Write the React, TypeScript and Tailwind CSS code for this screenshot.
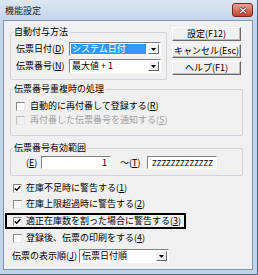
import React from 'react';

// underlined mnemonic letter, e.g. (D)
const Mn: React.FC<{ c: string }> = ({ c }) => (
  <>
    (<span className="underline underline-offset-[1px]">{c}</span>)
  </>
);

const Check: React.FC<{ checked?: boolean; disabled?: boolean }> = ({ checked = false, disabled = false }) => (
  <div
    className={`w-[9px] h-[9px] shrink-0 border border-t-[#8a8a8a] border-l-[#8a8a8a] border-r-[#e8e8e8] border-b-[#e8e8e8] flex items-center justify-center ${
      disabled ? 'bg-[#f0f0f0] border-t-[#c0c0c0] border-l-[#c0c0c0]' : 'bg-white'
    }`}
  >
    {checked && (
      <svg width="7" height="7" viewBox="0 0 7 7">
        <path d="M0.8 3.4 L2.7 5.3 L6.3 1.2" fill="none" stroke="#000" strokeWidth="1.4" />
      </svg>
    )}
  </div>
);

const DropBtn: React.FC = () => (
  <div className="w-[11px] h-full shrink-0 bg-[#f0f0f0] border border-t-white border-l-white border-r-[#696969] border-b-[#696969] flex items-center justify-center">
    <svg width="5" height="3" viewBox="0 0 5 3">
      <polygon points="0,0 5,0 2.5,3" fill="#000" />
    </svg>
  </div>
);

const Select: React.FC<{ text: string; selected?: boolean; className: string }> = ({ text, selected, className }) => (
  <div
    className={`${className} h-[14px] bg-white border border-t-[#808080] border-l-[#808080] border-r-white border-b-white flex p-px`}
  >
    <div
      className={`flex-1 mr-[2px] pl-[1px] flex items-center leading-[10px] ${
        selected ? 'bg-[#3399ff] text-white' : ''
      }`}
    >
      {text}
    </div>
    <DropBtn />
  </div>
);

const Button: React.FC<{ children: React.ReactNode }> = ({ children }) => (
  <div className="w-[69px] h-[14px] bg-[#f0f0f0] border border-t-white border-l-white border-r-[#696969] border-b-[#696969] shadow-[inset_-1px_-1px_0_#bdbdbd] flex items-center justify-center leading-[10px]">
    {children}
  </div>
);

const TextBox: React.FC<{ text: string; small?: boolean }> = ({ text, small }) => (
  <div
    className={`w-[70px] h-[13px] bg-white border border-t-[#808080] border-l-[#808080] border-r-white border-b-white flex items-center justify-end pr-[3px] ${
      small ? 'text-[8px] leading-[9px]' : 'leading-[10px]'
    }`}
  >
    {text}
  </div>
);

export default function App() {
  return (
    <div className="w-[258px] h-[275px] bg-[#c2d4e8] flex flex-col font-['Noto_Sans_CJK_JP',sans-serif] text-[9px] leading-[12px] text-black overflow-hidden border-r border-b border-[#50698a]">
      {/* Title bar */}
      <div className="h-[21px] shrink-0 flex items-start bg-gradient-to-b from-[#dce7f3] to-[#c2d4e8]">
        <span className="ml-[5px] mt-[5px] leading-[12px] text-[#1e1e1e]">機能設定</span>
        <div className="ml-auto mr-[4px] mt-[3px] w-[21px] h-[14px] rounded-[3px] border border-[#6e2b23] bg-gradient-to-b from-[#e8a194] to-[#c4402f] flex items-center justify-center">
          <svg width="8" height="7" viewBox="0 0 8 7">
            <path d="M1 1 L7 6 M7 1 L1 6" stroke="#3d1510" strokeWidth="2.6" />
            <path d="M1 1 L7 6 M7 1 L1 6" stroke="#fff" strokeWidth="1.4" />
          </svg>
        </div>
      </div>

      {/* Client area */}
      <div className="ml-[4px] w-[248px] h-[248px] shrink-0 bg-[#f0f0f0] shadow-[0_0_0_1px_#7f97b3] flex flex-col">
        {/* Top: group + buttons */}
        <div className="flex pt-[6px] pl-[6px]">
          <div className="mt-[5px] w-[157px] h-[48px] border border-[#cfd4da] rounded-[2px] flex flex-col">
            <span className="-mt-[7px] ml-[2px] px-[1px] w-fit bg-[#f0f0f0]">自動付与方法</span>
            <div className="mt-[4px] flex items-center pl-[5px]">
              <span className="w-[53px]">
                伝票日付<Mn c="D" />
              </span>
              <Select className="w-[92px]" text="システム日付" selected />
            </div>
            <div className="mt-[3px] flex items-center pl-[5px]">
              <span className="w-[53px]">
                伝票番号<Mn c="N" />
              </span>
              <Select className="w-[92px]" text="最大値 + 1" />
            </div>
          </div>
          <div className="ml-[5px] flex flex-col gap-[3px]">
            <Button>設定(F12)</Button>
            <Button>キャンセル(Esc)</Button>
            <Button>ヘルプ(F1)</Button>
          </div>
        </div>

        {/* Duplicate handling */}
        <div className="mt-[9px] ml-[6px] w-[233px] h-[47px] border border-[#cfd4da] rounded-[2px] flex flex-col">
          <span className="-mt-[7px] ml-[2px] px-[1px] w-fit bg-[#f0f0f0]">伝票番号重複時の処理</span>
          <div className="mt-[5px] h-[12px] flex items-center gap-[5px] pl-[5px]">
            <Check />
            <span>
              自動的に再付番して登録する<Mn c="R" />
            </span>
          </div>
          <div className="mt-[2px] h-[12px] flex items-center gap-[5px] pl-[5px] text-[#a0a0a0]">
            <Check disabled />
            <span>
              再付番した伝票番号を通知する<Mn c="S" />
            </span>
          </div>
        </div>

        {/* Valid range */}
        <div className="mt-[12px] ml-[6px] w-[233px] h-[28px] border border-[#cfd4da] rounded-[2px] flex flex-col">
          <span className="-mt-[7px] ml-[2px] px-[1px] w-fit bg-[#f0f0f0]">伝票番号有効範囲</span>
          <div className="mt-[2px] flex items-center pl-[15px]">
            <span className="w-[15px]">
              <Mn c="E" />
            </span>
            <TextBox text="1" />
            <span className="ml-[9px] w-[27px]">
              ～<Mn c="T" />
            </span>
            <TextBox text="ZZZZZZZZZZZZZ" small />
          </div>
        </div>

        {/* Stock warnings */}
        <div className="mt-[4px] h-[16px] flex items-center gap-[4px] pl-[9px]">
          <Check checked />
          <span>
            在庫不足時に警告する<Mn c="1" />
          </span>
        </div>
        <div className="h-[16px] flex items-center gap-[4px] pl-[9px]">
          <Check />
          <span>
            在庫上限超過時に警告する<Mn c="2" />
          </span>
        </div>
        <div className="mt-[1px] ml-[1px] w-[181px] h-[16px] border-2 border-black flex items-center gap-[4px] pl-[6px]">
          <Check checked />
          <span>
            適正在庫数を割った場合に警告する<Mn c="3" />
          </span>
        </div>
        <div className="mt-[1px] h-[16px] flex items-center gap-[4px] pl-[9px]">
          <Check />
          <span>
            登録後、伝票の印刷をする<Mn c="4" />
          </span>
        </div>
        <div className="mt-[3px] flex items-center pl-[8px]">
          <span className="w-[67px]">
            伝票の表示順<Mn c="J" />
          </span>
          <Select className="w-[90px]" text="伝票日付順" />
        </div>
      </div>
    </div>
  );
}
